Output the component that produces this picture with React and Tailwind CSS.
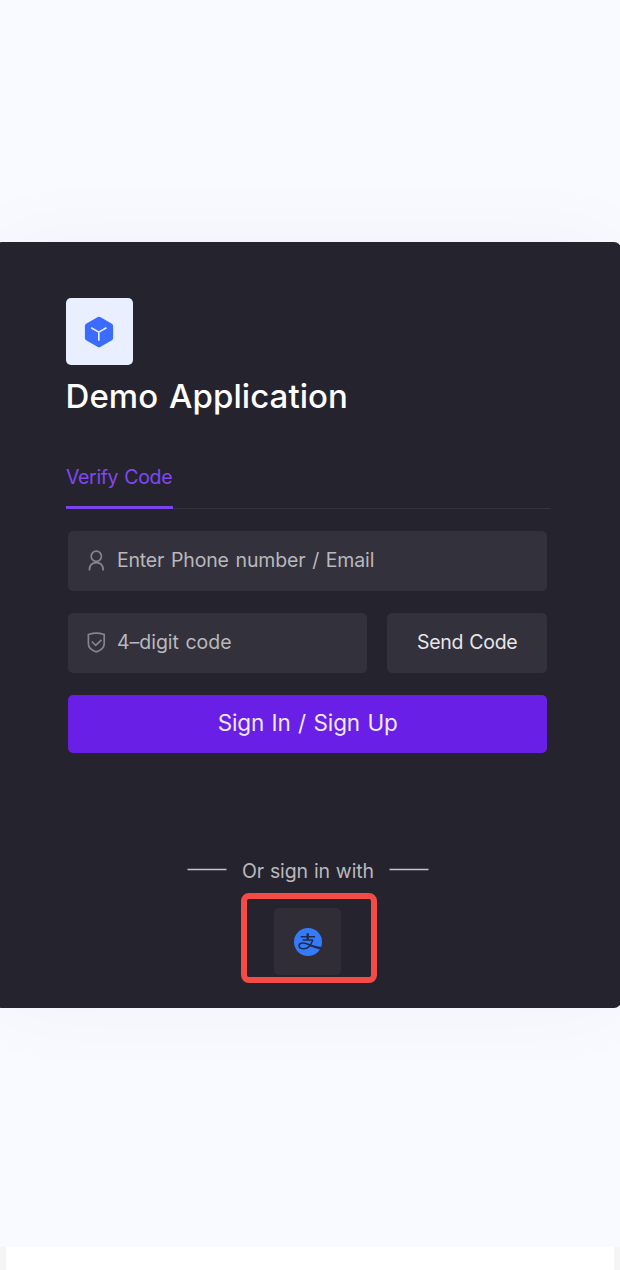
function CubeLogo() {
  return (
    <svg className="-ml-px" width="30" height="32" viewBox="0 0 30 32" fill="none">
      <path
        d="M13.4 1.2a3 3 0 0 1 3.2 0l11.3 6.5a2.5 2.5 0 0 1 1.2 2.2v12.2a2.5 2.5 0 0 1-1.2 2.2l-11.3 6.5a3 3 0 0 1-3.2 0L2.1 24.3a2.5 2.5 0 0 1-1.2-2.2V9.9a2.5 2.5 0 0 1 1.2-2.2z"
        fill="#3c6bff"
      />
      <path d="M7.2 11.8 14.8 16.2 22.4 11.8M14.8 16.2v8.6" stroke="#e9efff" strokeWidth="1.6" />
    </svg>
  );
}

function UserIcon() {
  return (
    <svg width="20" height="22" viewBox="0 0 20 22" fill="none" stroke="#858491" strokeWidth="1.7">
      <circle cx="10.3" cy="6.2" r="5.1" />
      <path d="M3.4 20.5c0-5.3 2.9-7.800 6.900-7.800s6.900 2.500 6.900 7.800" />
    </svg>
  );
}

function ShieldIcon() {
  return (
    <svg width="20" height="22" viewBox="0 0 20 22" fill="none" stroke="#858491" strokeWidth="1.7">
      <path d="M10.300 1.200c2.600 0 5.200.5 7.900 1.300v9.200c0 3.900-3.200 6.500-7.900 8.200-4.700-1.700-7.900-4.300-7.900-8.200V2.500c2.700-.8 5.300-1.300 7.900-1.300z" />
      <path d="m5.800 9.500 3.900 3.900 5.800-5.600" />
    </svg>
  );
}

function AlipayIcon() {
  return (
    <svg width="28" height="28" viewBox="0 0 28 28" fill="none">
      <circle cx="14" cy="14" r="14" fill="#347bfa" />
      <g stroke="#202b4c">
        <path d="M13.7 5.3v6.5" strokeWidth="2.4" />
        <path d="M6.7 8.8h14.4M8.6 12h10.600" strokeWidth="1.4" />
        <path
          d="M18.700 12c-1.300 4.500-4.600 8.600-9 8.800-3.200.1-4.900-1.300-4.700-3.200.2-1.700 1.900-2.700 4.200-2.600 3.300.1 6.300 2.100 9.700 3.300"
          strokeWidth="1.500"
        />
      </g>
      <path d="M15.800 16.200c3.400 1.200 7.200 2.100 11.800 2.800l-.9 2.700c-4-1.200-7.900-2.500-11.700-4.300z" fill="#202b4c" />
    </svg>
  );
}

function Dash() {
  return (
    <svg className="mb-[3px]" width="40" height="3" viewBox="0 0 40 3">
      <path d="M.5 1.600h39" stroke="#c6c6c6" strokeWidth="1.500" />
    </svg>
  );
}

export default function App() {
  return (
    <div className="flex h-[1270px] w-[620px] flex-col overflow-hidden bg-[#f9faff] font-['Inter','Liberation_Sans',sans-serif]">
      <main className="mx-[-5px] mt-[242px] h-[766px] w-[626px] shrink-0 rounded-[7px] bg-[#25232d] pr-[76px] pl-[71px] shadow-[0_0_90px_rgba(35,35,60,0.035)]">
        <div className="mt-[56px] flex size-[67px] items-center justify-center rounded-[5px] bg-[#e9efff]">
          <CubeLogo />
        </div>
        <h1 className="mt-[11px] -ml-[0.5px] h-[40px] w-max text-[33px] leading-[40px] font-medium tracking-[0.06px] whitespace-nowrap text-white [word-spacing:2px]">
          Demo Application
        </h1>
        <div className="mt-[42px] flex h-[51px] w-[484px] border-b border-[#35333e]">
          <div className="h-[51px] w-[107px] border-b-[3px] border-[#7b43ec] text-[19.5px] leading-[38px] tracking-[-0.36px] whitespace-nowrap text-[#8148f2] [word-spacing:1px]">
            Verify Code
          </div>
        </div>
        <form className="ml-[2.4px] w-[478.6px] pt-[22px]">
          <div className="flex h-[60px] items-center rounded-[5px] bg-[#33313b] pl-[17.5px] text-[19.5px] tracking-[-0.15px] text-[#b9b8bd] [word-spacing:1.4px]">
            <UserIcon />
            <span className="ml-[11px] pb-px whitespace-nowrap">Enter Phone number / Email</span>
          </div>
          <div className="mt-[22px] flex gap-5">
            <div className="flex h-[60px] w-[299px] items-center rounded-[5px] bg-[#33313b] pl-[17.5px] text-[19.5px] text-[#b9b8bd] [word-spacing:1px]">
              <ShieldIcon />
              <span className="ml-[11px] pb-px">4–digit code</span>
            </div>
            <button type="button" className="h-[60px] flex-1 rounded-[5px] bg-[#33313b] pb-px text-[19.5px] tracking-[-0.3px] whitespace-nowrap text-[#e6e6e9] [word-spacing:1px]">
              Send Code
            </button>
          </div>
          <button type="button" className="mt-[22px] h-[58px] w-full rounded-[5px] bg-[#691fe6] pb-[2px] text-[22.5px] tracking-[-0.12px] text-[#f0eafd] [word-spacing:1.2px]">
            Sign In / Sign Up
          </button>
        </form>
        <div className="mt-[106px] ml-[3px] flex h-[24px] w-[478px] items-center justify-center gap-[15px] text-[19.5px] whitespace-nowrap text-[#b9b8bd]">
          <Dash />
          <span className="pt-px tracking-[-0.1px] [word-spacing:0.5px]">Or sign in with</span>
          <Dash />
        </div>
        <div className="mt-[10px] ml-[175px] flex h-[90px] w-[136px] items-center justify-center rounded-[8px] border-[6px] border-[#f44b46] pt-[7px] pr-[3px]">
          <div className="flex size-[67px] shrink-0 items-center justify-center rounded-[5px] bg-[#302d37]">
            <AlipayIcon />
          </div>
        </div>
      </main>
      <footer className="mt-[239px] h-[23px] border-x-[6px] border-[#f5f5f6] bg-white" />
    </div>
  );
}
